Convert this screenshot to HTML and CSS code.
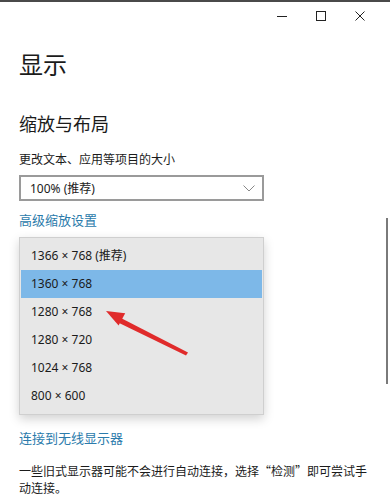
FILE: index.html
```html
<!DOCTYPE html>
<html lang="zh-CN">
<head>
  <meta charset="UTF-8" />
  <meta name="viewport" content="width=device-width, initial-scale=1" />
  <title>显示</title>
  <link rel="stylesheet" href="styles.css">
</head>
<body>
  <div class="window">
    <div class="titlebar">
      <span class="ctl">
        <svg width="10" height="10" viewBox="0 0 10 10"><path d="M0 5.5H10" stroke="#222" stroke-width="1"/></svg>
      </span>
      <span class="ctl">
        <svg width="10" height="10" viewBox="0 0 10 10"><rect x="0.5" y="0.5" width="9" height="9" fill="none" stroke="#222" stroke-width="1"/></svg>
      </span>
      <span class="ctl">
        <svg width="10" height="10" viewBox="0 0 10 10"><path d="M0.5 0.5L9.5 9.5M9.5 0.5L0.5 9.5" stroke="#222" stroke-width="1"/></svg>
      </span>
    </div>

    <main class="content">
      <h1>显示</h1>
      <h2>缩放与布局</h2>
      <p class="label">更改文本、应用等项目的大小</p>

      <div class="select">
        <span>100% (推荐)</span>
        <svg width="12" height="7" viewBox="0 0 12 7"><path d="M0.5 0.5L6 6L11.5 0.5" fill="none" stroke="#888" stroke-width="1"/></svg>
      </div>

      <a class="link" href="#">高级缩放设置</a>

      <ul class="dropdown">
        <li>1366 × 768 (推荐)</li>
        <li class="active">1360 × 768</li>
        <li>1280 × 768</li>
        <li>1280 × 720</li>
        <li>1024 × 768</li>
        <li>800 × 600</li>
      </ul>

      <a class="link" href="#">连接到无线显示器</a>

      <p class="note">一些旧式显示器可能不会进行自动连接，选择“检测”即可尝试手<br>动连接。</p>
    </main>

    <div class="scrollbar"></div>

    <!-- red annotation arrow -->
    <svg class="arrow" width="390" height="500" viewBox="0 0 390 500">
      <polygon points="117,316 188,352.5 186,355.5 115,321" fill="#e02b2b"/>
      <polygon points="106,311 125.2,313.2 118.6,325.6" fill="#e02b2b"/>
    </svg>
  </div>
</body>
</html>
```

FILE: styles.css
```css
* {
  box-sizing: border-box;
}

body {
  margin: 0;
  padding: 0;
  background: #fff;
  font-family: "Noto Sans", "Noto Sans CJK SC", sans-serif;
  color: #1b1b1b;
}

.window {
  position: relative;
  width: 390px;
  height: 500px;
  overflow: hidden;
  border-top: 2px solid #4a4a4a;
}

.titlebar {
  height: 28px;
  display: flex;
  justify-content: flex-end;
  align-items: center;
  padding-right: 11px;
}

.ctl {
  width: 39px;
  height: 28px;
  display: flex;
  align-items: center;
  justify-content: center;
}

.content {
  padding-left: 19px;
}

h1 {
  margin: 18px 0 0;
  font-size: 24px;
  line-height: 32px;
  font-weight: 400;
  font-family: "Noto Sans CJK SC", sans-serif;
}

h2 {
  margin: 30px 0 0;
  font-size: 18px;
  line-height: 26px;
  font-weight: 400;
  font-family: "Noto Sans CJK SC", sans-serif;
}

.label {
  margin: 14px 0 0;
  font-size: 12px;
  line-height: 18px;
  font-family: "Noto Sans CJK SC", sans-serif;
}

.select {
  margin-top: 7px;
  width: 245px;
  height: 26px;
  border: 2px solid #9a9a9a;
  display: flex;
  align-items: center;
  justify-content: space-between;
  padding: 0 7px 0 9px;
  font-size: 12px;
}

.link {
  display: block;
  margin-top: 10px;
  font-size: 13px;
  line-height: 18px;
  color: #2b7bab;
  text-decoration: none;
  font-family: "Noto Sans CJK SC", sans-serif;
}

.dropdown {
  list-style: none;
  margin: 8px 0 0;
  padding: 4px 1px;
  width: 245px;
  background: #e7e7e7;
  border: 1px solid #cfcfcf;
  box-shadow: 0 4px 10px rgba(0, 0, 0, 0.18);
}

.dropdown li {
  height: 28px;
  line-height: 28px;
  padding-left: 10px;
  font-size: 12px;
  color: #1b1b1b;
}

.dropdown li.active {
  background: #7db8e8;
}

.dropdown + .link {
  margin-top: 14px;
}

.note {
  margin: 15px 0 0;
  width: 365px;
  font-size: 12px;
  line-height: 17px;
  font-family: "Noto Sans CJK SC", sans-serif;
}

.scrollbar {
  position: absolute;
  right: 2px;
  top: 216px;
  width: 2px;
  height: 166px;
  background: #7a7a7a;
}

.arrow {
  position: absolute;
  left: 0;
  top: -2px;
  pointer-events: none;
}
```
